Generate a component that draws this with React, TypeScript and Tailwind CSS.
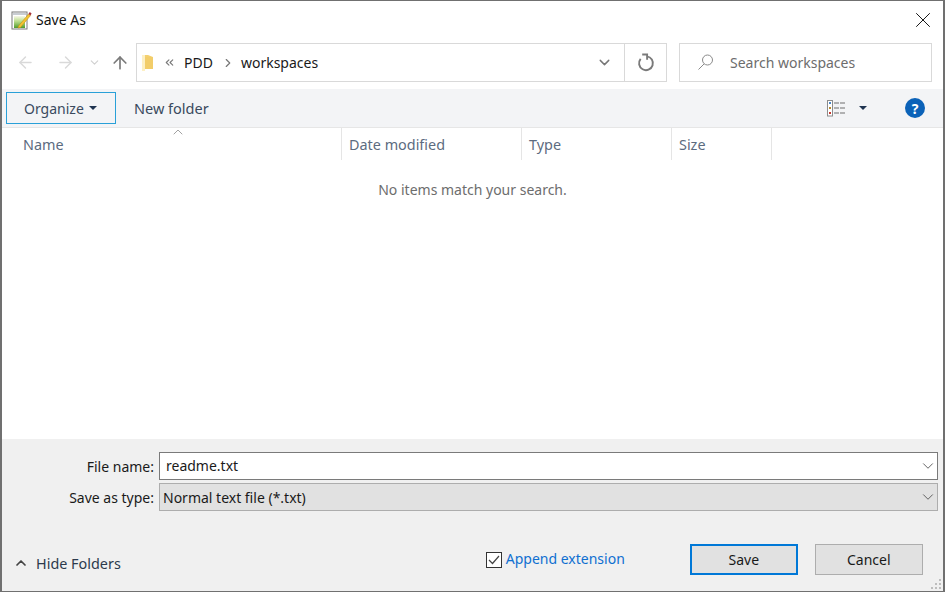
import { ArrowLeft, ArrowRight, ArrowUp, ChevronDown, ChevronRight, ChevronUp, ChevronsLeft, X } from 'lucide-react'

const columns = [
  { label: 'Name', width: 'w-[340px] pl-[21px]' },
  { label: 'Date modified', width: 'w-[180px] pl-[7px]' },
  { label: 'Type', width: 'w-[150px] pl-[7px]' },
  { label: 'Size', width: 'w-[100px] pl-[7px]' },
]

function TitleIcon() {
  return (
    <svg width="21" height="20" viewBox="0 0 21 20" className="shrink-0">
      <defs>
        <linearGradient id="page" x1="0" y1="0" x2="0" y2="1">
          <stop offset="0" stopColor="#f7f8e8" />
          <stop offset="0.45" stopColor="#b9dc8a" />
          <stop offset="1" stopColor="#4f9a2e" />
        </linearGradient>
      </defs>
      <rect x="1" y="2" width="15" height="17" fill="#fff" stroke="#7a7a7a" />
      <path d="M2 3h13v2H2z" fill="#c9cdd2" />
      <rect x="3" y="6" width="11" height="12" fill="url(#page)" />
      <path d="M7.5 16 L17.5 4 L19.5 5.6 L9.5 17.4 L7 18 Z" fill="#f2c230" stroke="#b88a12" strokeWidth="0.5" />
      <path d="M17.5 4 L18.8 2 L20.6 3.4 L19.5 5.6 Z" fill="#a8323a" />
    </svg>
  )
}

function FolderIcon() {
  return (
    <svg width="14" height="18" viewBox="0 0 14 18" className="shrink-0">
      <path d="M1 1 H7 L12 3 V15 H4 V17 H1 Z" fill="#f4d06f" />
      <path d="M1 1 H4 V17 H1 Z" fill="#fdf0c4" />
      <path d="M4 3 H12 V15 H4 Z" fill="#f2cd6a" />
    </svg>
  )
}

function RefreshIcon() {
  return (
    <svg width="18" height="19" viewBox="0 0 16 17" className="shrink-0" fill="none" stroke="#7a7a7a" strokeWidth="1.7">
      <path d="M8.8 3 A6.2 6.2 0 1 1 3.2 5.2" />
      <path d="M4.6 1.4 H9 V6" />
    </svg>
  )
}

function ViewIcon() {
  return (
    <svg width="19" height="17" viewBox="0 0 19 17" className="ml-auto shrink-0">
      <rect x="0.5" y="0.5" width="5" height="15.5" fill="#fff" stroke="#8c8c8c" />
      <rect x="2" y="2" width="2" height="2" fill="#4a86c5" />
      <rect x="2" y="7" width="2" height="2" fill="#b98b2c" />
      <rect x="2" y="12" width="2" height="2" fill="#c8382e" />
      <path d="M7 3 H18 M7 8 H18 M7 13 H18" stroke="#6f6f6f" strokeDasharray="5 1" />
    </svg>
  )
}

function Caret({ className = '' }: { className?: string }) {
  return <span className={`h-0 w-0 border-x-[4px] border-t-[4px] border-x-transparent ${className}`} />
}

function Resizer() {
  return (
    <svg width="12" height="12" viewBox="0 0 12 12" className="absolute bottom-[1px] right-[1px]">
      <path d="M9 1h2v2H9zM5 5h2v2H5zM9 5h2v2H9zM1 9h2v2H1zM5 9h2v2H5zM9 9h2v2H9z" fill="#bdbdbd" />
    </svg>
  )
}

export default function App() {
  return (
    <div className="relative flex h-[592px] w-[945px] flex-col overflow-hidden border-y border-x-2 border-y-[#707070] border-x-[#707070] bg-white font-['Noto_Sans',sans-serif] text-[14px] text-[#1a1a1a]">
      {/* Title bar */}
      <div className="flex h-[39px] shrink-0 items-center pb-[2px] pl-[9px] pr-[7px]">
        <TitleIcon />
        <span className="ml-[4px] text-[#111]">Save As</span>
        <X className="ml-auto h-[26px] w-[26px] text-[#111]" strokeWidth={0.9} />
      </div>

      {/* Address row */}
      <div className="flex h-[49px] shrink-0 items-start">
        <div className="mt-[3px] flex h-[39px] w-[134px] items-center pl-[14px]">
          <ArrowLeft className="h-[19px] w-[19px] text-[#d9d9d9]" strokeWidth={1.8} />
          <ArrowRight className="ml-[21px] h-[19px] w-[19px] text-[#d9d9d9]" strokeWidth={1.8} />
          <ChevronDown className="ml-[13px] h-[13px] w-[13px] text-[#d0d0d0]" strokeWidth={2} />
          <ArrowUp className="ml-[9px] h-[20px] w-[20px] text-[#7a7a7a]" strokeWidth={2} />
        </div>
        <div className="mt-[3px] flex h-[39px] w-[531px] items-center border border-[#d9d9d9] pl-[4px]">
          <FolderIcon />
          <ChevronsLeft className="ml-[8px] h-[13px] w-[13px] text-[#777]" strokeWidth={2} />
          <span className="ml-[8px]">PDD</span>
          <ChevronRight className="ml-[8px] h-[14px] w-[14px] text-[#777]" strokeWidth={2} />
          <span className="ml-[6px]">workspaces</span>
          <ChevronDown className="ml-auto mr-[11px] h-[17px] w-[17px] text-[#777]" strokeWidth={2} />
          <div className="flex h-full w-[42px] items-center justify-center border-l border-[#d9d9d9]">
            <RefreshIcon />
          </div>
        </div>
        <div className="ml-[12px] mt-[3px] flex h-[39px] w-[253px] items-center border border-[#d9d9d9] pl-[17px] text-[#6d6d6d]">
          <svg width="17" height="17" viewBox="0 0 17 17" className="shrink-0" fill="none" stroke="#8a8a8a">
            <circle cx="10.5" cy="6" r="5" />
            <path d="M7 10 L1.5 15.5" />
          </svg>
          <span className="ml-[16px]">Search workspaces</span>
        </div>
      </div>

      {/* Toolbar */}
      <div className="flex h-[39px] shrink-0 items-center border-b border-[#e6e6e6] bg-[#f3f4f6] pl-[4px] pr-[18px] text-[#3a4a5e]">
        <div className="flex h-[32px] w-[110px] items-center border border-[#29a0d8] pl-[17px]">
          <span>Organize</span>
          <Caret className="ml-[5px] border-t-[#1f3350]" />
        </div>
        <span className="ml-[18px] pt-[2px] text-[14.5px]">New folder</span>
        <ViewIcon />
        <Caret className="ml-[13px] border-t-[#1f3350]" />
        <span className="ml-[38px] flex h-[20px] w-[20px] items-center justify-center rounded-full bg-[#0b62b8] text-[14px] font-bold text-white">?</span>
      </div>

      {/* File list */}
      <div className="relative min-h-0 flex-1">
        <div className="flex h-[32px] text-[14.4px] text-[#5c6b80]">
          {columns.map((c) => (
            <div key={c.label} className={`flex items-center border-r border-[#e5e5e5] pt-[2px] ${c.width}`}>
              {c.label}
            </div>
          ))}
        </div>
        <ChevronUp className="absolute left-[168px] top-[-4px] h-[16px] w-[16px] text-[#8a8a8a]" strokeWidth={1.2} />
        <p className="mt-[19px] text-center text-[#6d6d6d]">No items match your search.</p>
      </div>

      {/* Bottom panel */}
      <div className="relative flex h-[152px] shrink-0 flex-col bg-[#f0f0f0] pl-[2px] pr-[5px]">
        <div className="mt-[13px] flex items-center justify-end">
          <span className="mr-[5px]">File name:</span>
          <div className="flex h-[28px] w-[779px] items-center border border-[#7a7a7a] bg-white pb-[2px] pl-[6px]">
            readme.txt
            <ChevronDown className="ml-auto mt-[2px] h-[18px] w-[18px] text-[#444]" strokeWidth={1.1} />
          </div>
        </div>
        <div className="mt-[3px] flex items-center justify-end">
          <span className="mr-[5px]">Save as type:</span>
          <div className="flex h-[28px] w-[779px] items-center border border-[#adadad] bg-[#e1e1e1] pl-[3px]">
            Normal text file (*.txt)
            <ChevronDown className="ml-auto h-[18px] w-[18px] text-[#444]" strokeWidth={1.1} />
          </div>
        </div>
        <div className="mt-[33px] flex items-center">
          <div className="mt-[8px] flex items-center">
            <ChevronUp className="ml-[9px] h-[16px] w-[16px] text-[#444]" strokeWidth={2.6} />
            <span className="ml-[7px] text-[14.4px] text-[#2c3a4c]">Hide Folders</span>
          </div>
          <div className="ml-[365px] flex h-[16px] w-[16px] items-center justify-center border border-[#333] bg-white">
            <svg width="12" height="10" viewBox="0 0 12 10" fill="none" stroke="#444" strokeWidth="1.2">
              <path d="M1 5 L4.5 8.5 L11 1" />
            </svg>
          </div>
          <span className="mb-[2px] ml-[4px] text-[#0f6fd0]">Append extension</span>
          <button className="ml-[65px] h-[31px] w-[108px] border-2 border-[#0078d7] bg-[#e1e1e1]">Save</button>
          <button className="ml-[17px] h-[31px] w-[108px] border border-[#adadad] bg-[#e1e1e1]">Cancel</button>
        </div>
        <Resizer />
      </div>
    </div>
  )
}
